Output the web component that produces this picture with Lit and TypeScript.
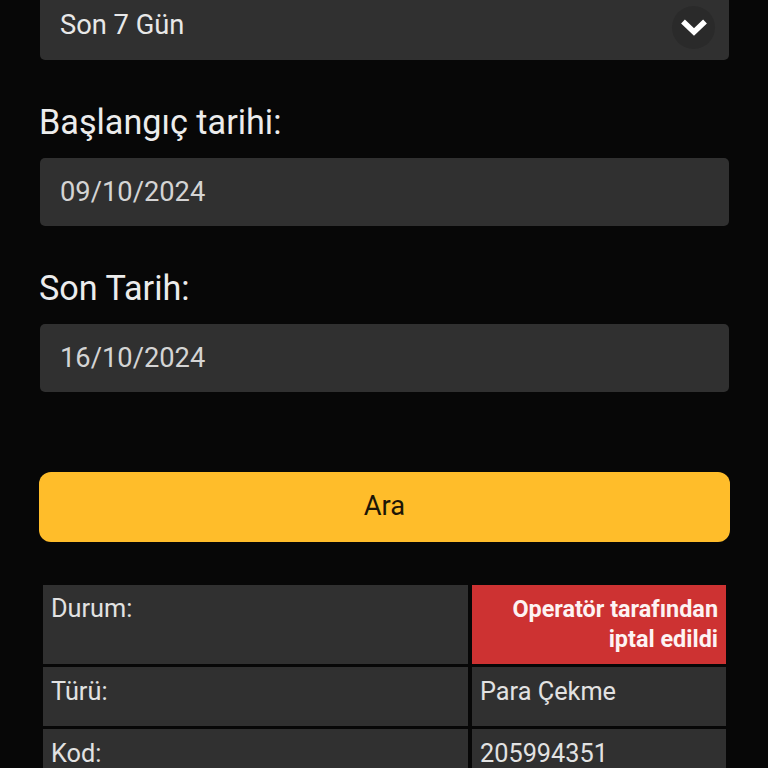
import { LitElement, html, css } from "lit";
import { customElement } from "lit/decorators.js";

@customElement("app-root")
export class AppRoot extends LitElement {
  static styles = css`
    :host {
      display: block;
      width: 768px;
      height: 768px;
      overflow: hidden;
      background: #070707;
      font-family: Roboto, "Liberation Sans", sans-serif;
      color: #e6e6e6;
    }
    .page {
      display: flex;
      flex-direction: column;
      padding: 0 39px 0 40px;
      margin-top: -8px;
    }
    .field {
      height: 68px;
      box-sizing: border-box;
      border-radius: 5px;
      background: #303030;
      display: flex;
      align-items: center;
      justify-content: space-between;
      padding: 0 14px 0 20px;
      font-size: 27.3px;
      color: #d4d4d4;
    }
    .select {
      color: #e8e8e8;
    }
    .select-text {
      margin-bottom: 2px;
    }
    .chev {
      width: 43px;
      height: 43px;
      border-radius: 50%;
      background: #2a2a2a;
      display: flex;
      align-items: center;
      justify-content: center;
      margin-top: 2px;
    }
    label {
      display: block;
      font-size: 34.2px;
      line-height: 38px;
      color: #ececec;
      margin: 43px 0 17px -1px;
    }
    .btn {
      margin: 80px -1px 0 -1px;
      height: 70px;
      box-sizing: border-box;
      padding-bottom: 2px;
      border-radius: 12px;
      background: #ffbd2a;
      color: #1d1606;
      display: flex;
      align-items: center;
      justify-content: center;
      font-size: 27.3px;
    }
    .table {
      margin: 43px 3px 0 3px;
      display: grid;
      grid-template-columns: 425px 254px;
      column-gap: 4px;
      row-gap: 3px;
      font-size: 25.3px;
      line-height: 34px;
    }
    .cell {
      background: #303030;
      padding: 8px 8px;
      color: #e2e2e2;
      height: 59px;
      box-sizing: border-box;
    }
    .cell.tall {
      height: 79px;
      padding-top: 7px;
    }
    .cell.status {
      background: #cd3232;
      color: #fdf3f3;
      font-weight: 700;
      font-size: 23.4px;
      line-height: 30px;
      text-align: right;
      padding: 9px 8px 0;
    }
  `;

  render() {
    return html`
      <div class="page">
        <div class="field select">
          <span class="select-text">Son 7 Gün</span>
          <span class="chev">
            <svg width="28" height="20" viewBox="0 0 28 20" fill="none">
              <path d="M3 4.5 L14 15 L25 4.5" stroke="#fff" stroke-width="5.5" stroke-linejoin="miter" />
            </svg>
          </span>
        </div>
        <label>Başlangıç tarihi:</label>
        <div class="field">09/10/2024</div>
        <label>Son Tarih:</label>
        <div class="field">16/10/2024</div>
        <div class="btn">Ara</div>
        <div class="table">
          <div class="cell tall">Durum:</div>
          <div class="cell tall status">Operatör tarafından<br />iptal edildi</div>
          <div class="cell">Türü:</div>
          <div class="cell">Para Çekme</div>
          <div class="cell">Kod:</div>
          <div class="cell">205994351</div>
        </div>
      </div>
    `;
  }
}
